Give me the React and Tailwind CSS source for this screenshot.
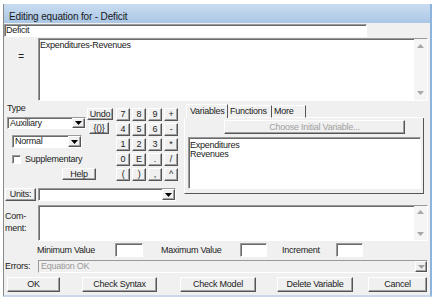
import React from 'react';

const raised =
  'border border-t-white border-l-white border-r-[#555] border-b-[#555] shadow-[inset_-1px_-1px_0_#a0a0a0] bg-[#f0f0f0]';
const sunken =
  'border border-t-[#9a9a9a] border-l-[#9a9a9a] border-r-white border-b-white shadow-[inset_1px_1px_0_#6a6a6a] bg-white';

const Arrow = ({ up, color = '#000' }) => (
  <svg width="7" height="4" viewBox="0 0 7 4">
    <polygon points={up ? '0,4 7,4 3.5,0' : '0,0 7,0 3.5,4'} fill={color} />
  </svg>
);

const Btn = ({ className = '', dim, children }) => (
  <div
    className={`${raised} flex items-center justify-center whitespace-nowrap leading-none ${dim ? 'text-[#a0a0a0]' : 'text-[#222]'} ${className}`}
  >
    {children}
  </div>
);

const Combo = ({ className = '', text }) => (
  <div className={`${sunken} flex items-stretch ${className}`}>
    <div className="flex-1 flex items-center pl-[2px] leading-none">{text}</div>
    <div className={`${raised} w-[13px] flex items-center justify-center`}>
      <Arrow />
    </div>
  </div>
);

const ScrollCol = ({ top = 'pt-[5px]', bottom = 'pb-[5px]' }) => (
  <div className={`w-[13px] bg-[#f5f5f5] flex flex-col justify-between items-center ${top} ${bottom}`}>
    <Arrow up color="#a8a8a8" />
    <Arrow color="#a8a8a8" />
  </div>
);

const keys = ['7', '8', '9', '+', '4', '5', '6', '-', '1', '2', '3', '*', '0', 'E', '.', '/', '(', ')', ',', '^'];

export default function App() {
  return (
    <div className="w-[439px] h-[304px] bg-white overflow-hidden font-['Liberation_Sans',Arial,sans-serif] text-[9px] tracking-[-0.25px] text-[#222]">
      <div className="ml-[3px] mt-[4px] w-[429px] h-[293px] border-l border-l-[#8a8a8a] border-r-2 border-r-[#8cb4dc] border-b-2 border-b-[#c9d9ea] flex flex-col">
        {/* title bar */}
        <div className="h-[19px] shrink-0 bg-gradient-to-b from-[#c9dcf0] to-[#aac7e6] pl-[5px] pt-[7px] text-[10px] leading-[12px] tracking-[-0.15px] text-[#1a1a1a]">
          Editing equation for - Deficit
        </div>

        <div className="flex-1 bg-[#f0f0f0] flex flex-col overflow-hidden">
          {/* name */}
          <div className={`${sunken} mt-[1px] h-[13px] w-[363px] shrink-0 pl-[1px] leading-[11px]`}>Deficit</div>

          {/* equation */}
          <div className="mt-[1px] h-[63px] shrink-0 flex">
            <div className="w-[34px] text-center pt-[14px] text-[10px] leading-[10px]">=</div>
            <div className={`${sunken} w-[390px] flex`}>
              <div className="flex-1 pl-[1px] pt-[1px] leading-[11px]">Expenditures-Revenues</div>
              <ScrollCol />
            </div>
          </div>

          {/* middle */}
          <div className="flex shrink-0">
            <div className="w-[180px] flex flex-col">
              <div className="flex">
                <div className="w-[109px] shrink-0 flex flex-col">
                  <div className="flex">
                    <div className="w-[83px] shrink-0 flex flex-col">
                      <div className="mt-[2px] h-[11px] pl-[3px] leading-[11px]">Type</div>
                      <Combo className="mt-[3px] ml-[3px] w-[79px] h-[12px]" text="Auxiliary" />
                      <Combo className="mt-[6px] ml-[8px] w-[70px] h-[13px]" text="Normal" />
                      <div className="mt-[7px] h-[9px] flex items-center">
                        <div className={`${sunken} ml-[8px] w-[9px] h-[9px]`} />
                        <span className="ml-[4px] leading-none">Supplementary</span>
                      </div>
                    </div>
                    <div className="flex flex-col">
                      <Btn className="mt-[7px] w-[26px] h-[12px] tracking-[-0.3px]">Undo</Btn>
                      <Btn className="mt-[2px] ml-[2px] w-[20px] h-[12px]">{'{()}'}</Btn>
                    </div>
                  </div>
                  <Btn className="mt-[4px] ml-[58px] w-[34px] h-[12px]">Help</Btn>
                </div>
                <div className="ml-[3px] mt-[7px] grid grid-cols-[repeat(4,14px)] auto-rows-[13px] gap-[2px]">
                  {keys.map((k) => (
                    <Btn key={k}>{k}</Btn>
                  ))}
                </div>
              </div>
              <div className="mt-[7px] h-[13px] flex">
                <Btn className="ml-[1px] w-[31px]">Units:</Btn>
                <Combo className="ml-[2px] w-[138px]" text="" />
              </div>
            </div>

            {/* tab panel */}
            <div className="w-[240px] flex flex-col">
              <div className="mt-[3px] h-[14px] flex pl-[2px] items-end">
                <div className="h-[14px] w-[42px] border-t border-l border-t-white border-l-white border-r border-r-[#555] pl-[3px] leading-[12px]">
                  Variables
                </div>
                <div className="h-[13px] w-[44px] border-t border-t-white border-r border-r-[#555] border-b border-b-white pl-[2px] leading-[11px]">
                  Functions
                </div>
                <div className="h-[13px] w-[34px] border-t border-t-white border-r border-r-[#555] border-b border-b-white pl-[2px] leading-[11px]">
                  More
                </div>
                <div className="flex-1 border-b border-b-white" />
              </div>
              <div className="h-[76px] border-l border-l-white border-r border-r-[#555] border-b border-b-[#555] flex flex-col">
                <Btn dim className="mt-[2px] ml-[39px] w-[181px] h-[14px]">
                  Choose Initial Variable...
                </Btn>
                <div className={`${sunken} mt-[3px] ml-[3px] w-[233px] h-[52px] pl-[1px] pt-[3px] leading-[9px]`}>
                  <div>Expenditures</div>
                  <div>Revenues</div>
                </div>
              </div>
            </div>
          </div>

          {/* comment */}
          <div className="mt-[4px] h-[36px] shrink-0 flex">
            <div className="w-[34px] pl-[1px] pt-[5px] leading-[12px]">
              <div>Com-</div>
              <div>ment:</div>
            </div>
            <div className={`${sunken} w-[390px] flex`}>
              <div className="flex-1" />
              <ScrollCol top="pt-[4px]" bottom="pb-[4px]" />
            </div>
          </div>

          {/* min / max / increment */}
          <div className="mt-[2px] h-[14px] shrink-0 flex items-center">
            <span className="ml-[33px] w-[78px] leading-none">Minimum Value</span>
            <div className={`${sunken} w-[28px] h-[14px]`} />
            <span className="w-[97px] pl-[18px] leading-none">Maximum Value</span>
            <div className={`${sunken} w-[27px] h-[14px]`} />
            <span className="w-[69px] pl-[15px] leading-none">Increment</span>
            <div className={`${sunken} w-[27px] h-[14px]`} />
          </div>

          {/* errors */}
          <div className="mt-[3px] h-[13px] shrink-0 flex items-stretch">
            <div className="w-[34px] pl-[1px] flex items-center leading-none">Errors:</div>
            <div className="w-[390px] border border-t-[#9a9a9a] border-l-[#9a9a9a] border-r-white border-b-white bg-[#f0f0f0] flex">
              <div className="flex-1 pl-[2px] flex items-center leading-none text-[#9a9a9a]">Equation OK</div>
              <div className={`${raised} w-[12px] flex items-center justify-center`}>
                <Arrow color="#a0a0a0" />
              </div>
            </div>
          </div>

          {/* buttons */}
          <div className="mt-[4px] h-[15px] shrink-0 flex">
            <Btn className="ml-[3px] w-[53px]">OK</Btn>
            <Btn className="ml-[22px] w-[75px]">Check Syntax</Btn>
            <Btn className="ml-[23px] w-[76px]">Check Model</Btn>
            <Btn className="ml-[21px] w-[76px]">Delete Variable</Btn>
            <Btn className="ml-[15px] w-[59px]">Cancel</Btn>
          </div>
        </div>
      </div>
    </div>
  );
}
